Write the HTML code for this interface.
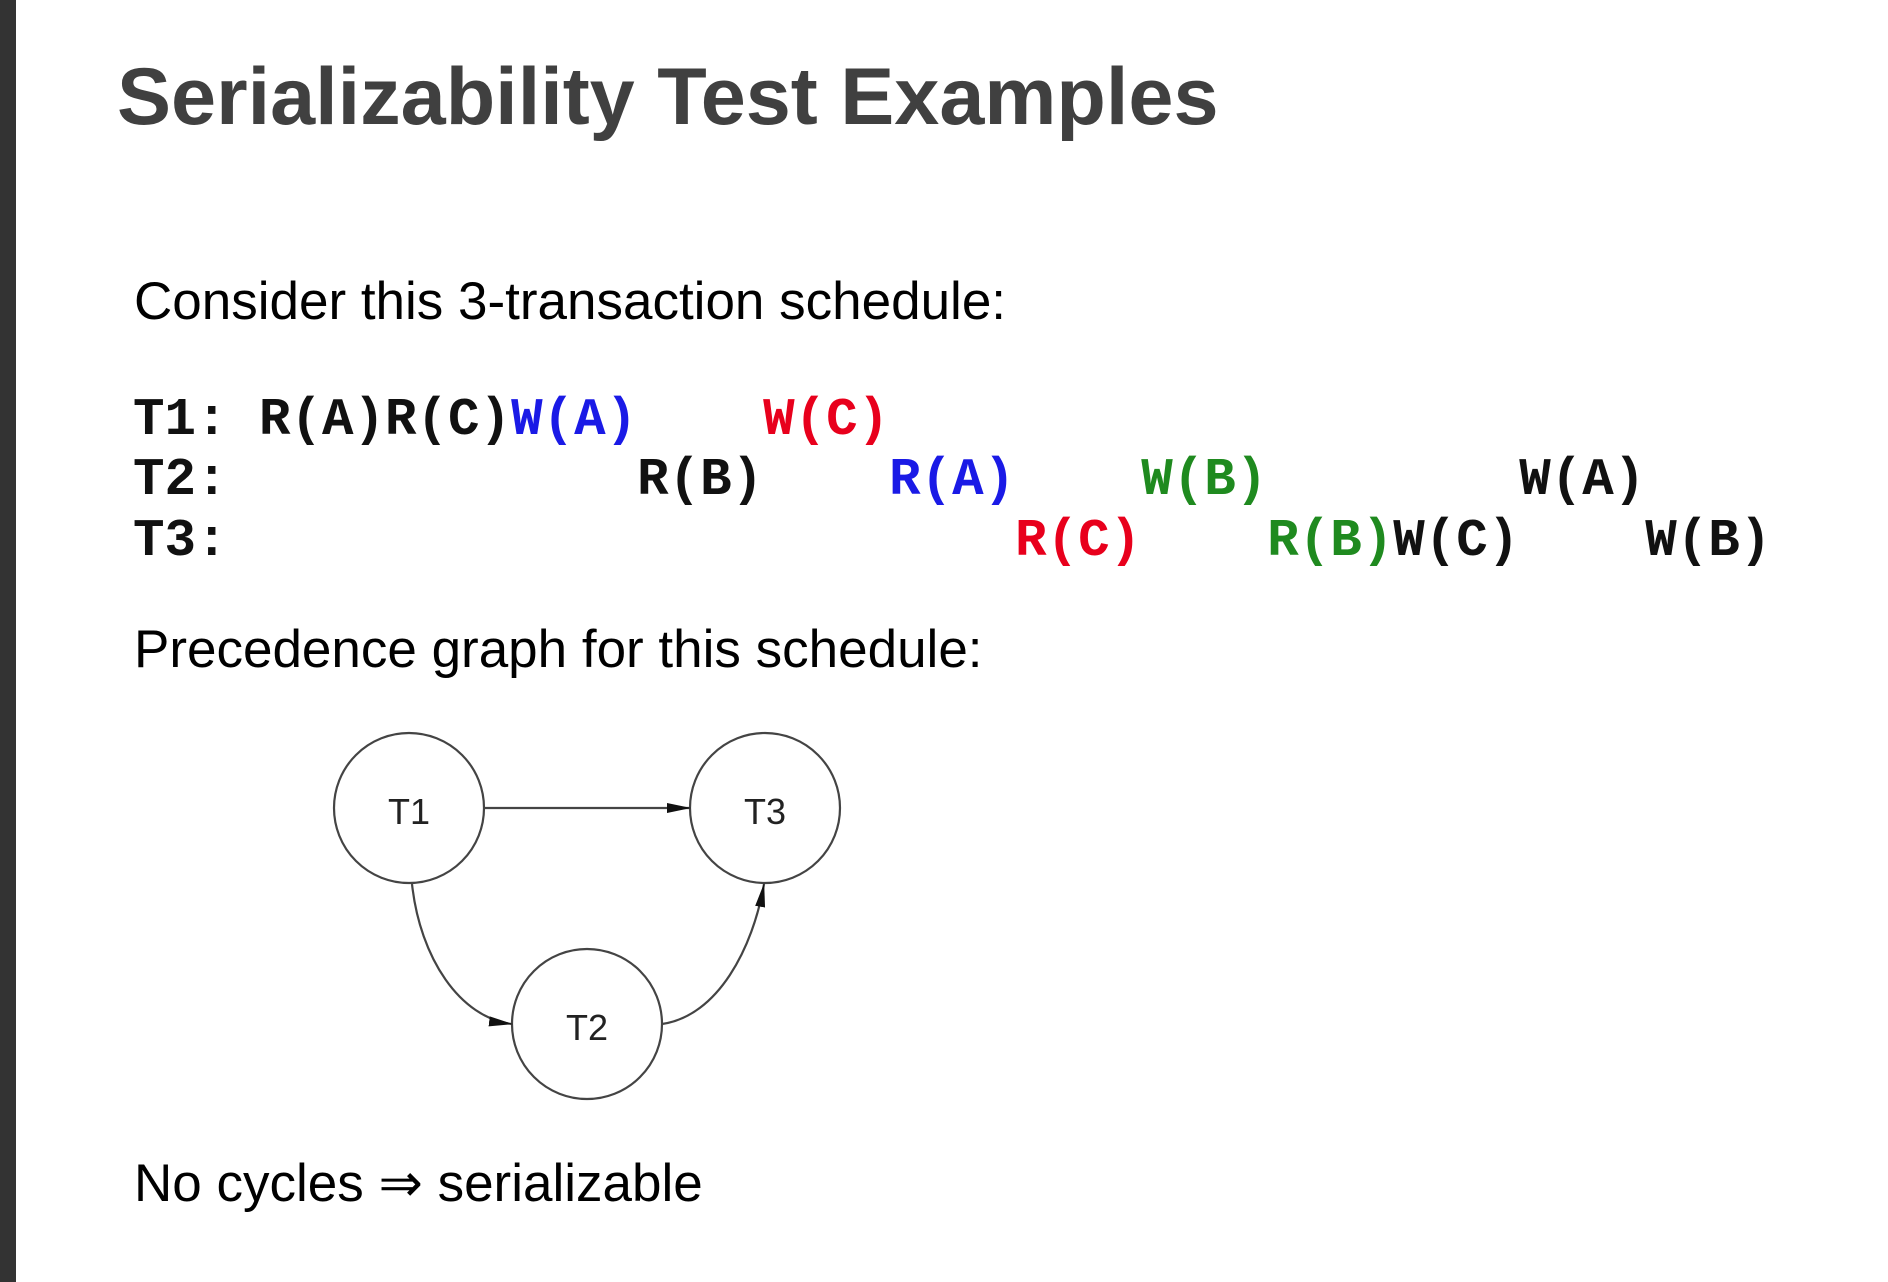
<!DOCTYPE html>
<html><head><meta charset="utf-8"><style>
html,body{margin:0;padding:0;background:#fff;}
body{width:1888px;height:1282px;position:relative;overflow:hidden;font-family:"Liberation Sans",Arial,sans-serif;}
.bar{position:absolute;left:0;top:0;width:16px;height:1282px;background:#333;}
.t{position:absolute;white-space:pre;line-height:1;}
h1{position:absolute;left:117px;top:57px;margin:0;font-size:81px;font-weight:bold;color:#404040;line-height:1;}
.p{font-size:53px;color:#000;left:134px;}
.m{font-family:"Liberation Mono",monospace;font-weight:bold;font-size:52.5px;color:#111;left:133px;}
.b{color:#1a1ae6}.r{color:#e8001c}.g{color:#1f8a1f}
</style></head><body>
<div class="bar"></div>
<h1>Serializability Test Examples</h1>
<div class="t p" style="top:275px">Consider this 3-transaction schedule:</div>
<div class="t m" style="top:394px">T1: R(A)R(C)<span class="b">W(A)</span>    <span class="r">W(C)</span></div>
<div class="t m" style="top:454px">T2:             R(B)    <span class="b">R(A)</span>    <span class="g">W(B)</span>        W(A)</div>
<div class="t m" style="top:515px">T3:                         <span class="r">R(C)</span>    <span class="g">R(B)</span>W(C)    W(B)</div>
<div class="t p" style="top:623px">Precedence graph for this schedule:</div>
<svg style="position:absolute;left:0;top:0" width="1888" height="1282">
<defs><marker id="a" markerWidth="24" markerHeight="14" refX="23" refY="7" orient="auto" markerUnits="userSpaceOnUse"><path d="M0,2 L24,7 L0,12 Z" fill="#111"/></marker></defs>
<g fill="none" stroke="#444" stroke-width="2.2">
<circle cx="409" cy="808" r="75"/><circle cx="765" cy="808" r="75"/><circle cx="587" cy="1024" r="75"/>
<path d="M485,808 L690,808" marker-end="url(#a)"/>
<path d="M412,884 C420,958 460,1018 512,1024" marker-end="url(#a)"/>
<path d="M662,1024 C718,1016 753,948 764,884" marker-end="url(#a)"/>
</g>
<g font-family="Liberation Sans,sans-serif" font-size="36" fill="#222" text-anchor="middle">
<text x="409" y="824">T1</text><text x="765" y="824">T3</text><text x="587" y="1040">T2</text>
</g>
</svg>
<div class="t p" style="top:1157px">No cycles ⇒ serializable</div>
</body></html>
